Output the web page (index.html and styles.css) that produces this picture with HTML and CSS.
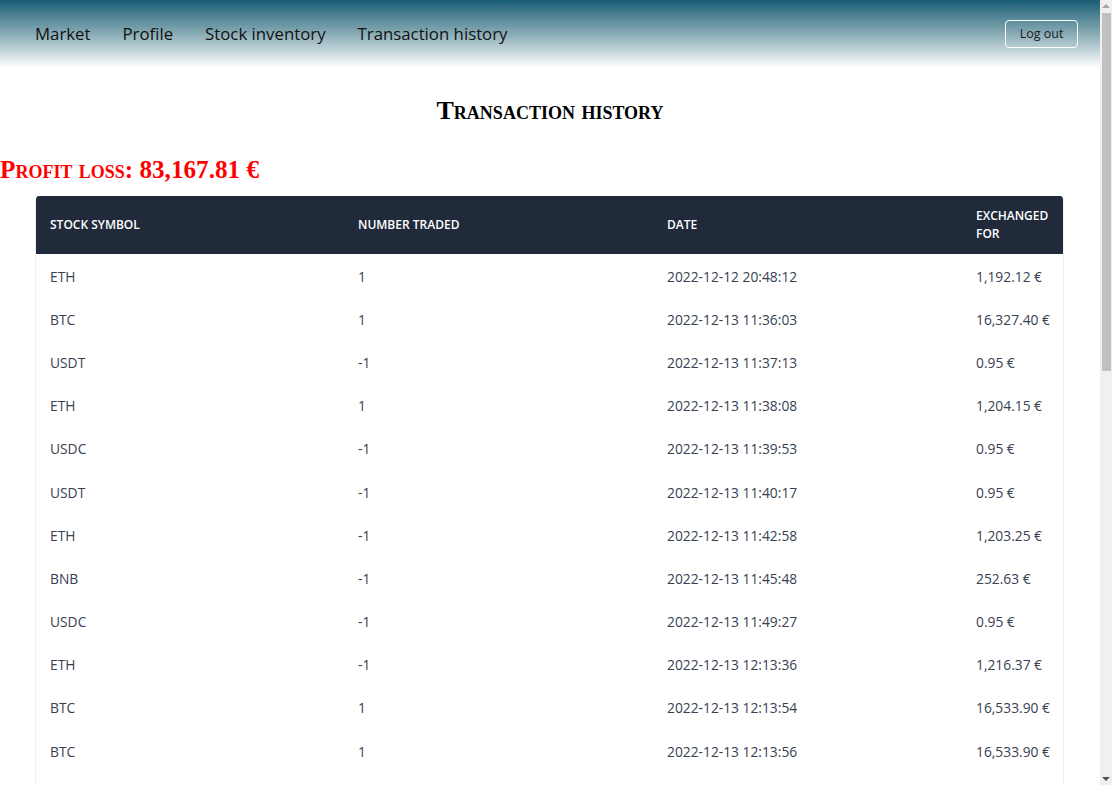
FILE: index.html
```html
<!DOCTYPE html>
<html lang="en">
<head>
<meta charset="utf-8">
<title>Transaction history</title>
<link rel="stylesheet" href="styles.css">
</head>
<body>
<div class="page">
<header class="topbar">
  <nav class="nav">
    <a class="nav-link" href="#">Market</a>
    <a class="nav-link" href="#">Profile</a>
    <a class="nav-link" href="#">Stock inventory</a>
    <a class="nav-link" href="#">Transaction history</a>
  </nav>
  <button class="logout">Log out</button>
</header>
<main>
  <h1 class="title">Transaction history</h1>
  <h2 class="profit">Profit loss: 83,167.81 €</h2>
  <div class="table-wrap">
    <table class="tx">
      <colgroup>
        <col class="c1"><col class="c2"><col class="c3"><col class="c4">
      </colgroup>
      <thead>
        <tr><th>Stock symbol</th><th>Number traded</th><th>Date</th><th>Exchanged for</th></tr>
      </thead>
      <tbody>
        <tr><td>ETH</td><td>1</td><td>2022-12-12 20:48:12</td><td>1,192.12 €</td></tr>
        <tr><td>BTC</td><td>1</td><td>2022-12-13 11:36:03</td><td>16,327.40 €</td></tr>
        <tr><td>USDT</td><td>-1</td><td>2022-12-13 11:37:13</td><td>0.95 €</td></tr>
        <tr><td>ETH</td><td>1</td><td>2022-12-13 11:38:08</td><td>1,204.15 €</td></tr>
        <tr><td>USDC</td><td>-1</td><td>2022-12-13 11:39:53</td><td>0.95 €</td></tr>
        <tr><td>USDT</td><td>-1</td><td>2022-12-13 11:40:17</td><td>0.95 €</td></tr>
        <tr><td>ETH</td><td>-1</td><td>2022-12-13 11:42:58</td><td>1,203.25 €</td></tr>
        <tr><td>BNB</td><td>-1</td><td>2022-12-13 11:45:48</td><td>252.63 €</td></tr>
        <tr><td>USDC</td><td>-1</td><td>2022-12-13 11:49:27</td><td>0.95 €</td></tr>
        <tr><td>ETH</td><td>-1</td><td>2022-12-13 12:13:36</td><td>1,216.37 €</td></tr>
        <tr><td>BTC</td><td>1</td><td>2022-12-13 12:13:54</td><td>16,533.90 €</td></tr>
        <tr><td>BTC</td><td>1</td><td>2022-12-13 12:13:56</td><td>16,533.90 €</td></tr>
        <tr><td>BTC</td><td>1</td><td>2022-12-13 12:14:02</td><td>16,533.90 €</td></tr>
        <tr><td>ETH</td><td>1</td><td>2022-12-13 12:15:21</td><td>1,216.37 €</td></tr>
      </tbody>
    </table>
  </div>
</main>
</div>
<div class="scrollbar" aria-hidden="true">
  <div class="sb-btn"><span class="tri-up"></span></div>
  <div class="sb-thumb"></div>
  <div class="sb-track"></div>
  <div class="sb-btn"><span class="tri-down"></span></div>
</div>
</body>
</html>
```
FILE: styles.css
```css
html, body {
  margin: 0;
  padding: 0;
}
body {
  font-family: "Open Sans", "Noto Sans", sans-serif;
  background: #ffffff;
  color: #111;
  display: flex;
  align-items: flex-start;
}
.page {
  flex: 1;
  min-width: 0;
}
.scrollbar {
  width: 12px;
  height: 100vh;
  flex-shrink: 0;
  position: sticky;
  top: 0;
  background: #f0f0f0;
  display: flex;
  flex-direction: column;
  align-items: center;
}
.sb-btn {
  height: 12px;
  width: 12px;
  display: flex;
  align-items: center;
  justify-content: center;
}
.tri-up {
  width: 0;
  height: 0;
  border-left: 4px solid transparent;
  border-right: 4px solid transparent;
  border-bottom: 4px solid #a3a3a3;
}
.tri-down {
  width: 0;
  height: 0;
  border-left: 4px solid transparent;
  border-right: 4px solid transparent;
  border-top: 4px solid #505050;
}
.sb-thumb {
  width: 9px;
  height: 358px;
  margin-top: 1px;
  background: #c1c1c1;
}
.sb-track {
  flex: 1;
}
.topbar {
  height: 68px;
  background: linear-gradient(to bottom, #1a5e76 0%, #7ea4af 45%, #ffffff 100%);
  display: flex;
  align-items: center;
  justify-content: space-between;
  padding: 0 22px 0 35px;
}
.nav {
  display: flex;
  gap: 32px;
  align-items: center;
  margin-top: -1px;
}
.nav-link {
  color: #111;
  text-decoration: none;
  font-size: 16.8px;
}
.logout {
  width: 73px;
  height: 28px;
  border: 1px solid #ffffff;
  border-radius: 4px;
  background: transparent;
  color: #1a1a1a;
  font-family: "Open Sans", "Noto Sans", sans-serif;
  font-size: 12.5px;
  padding: 0;
  margin-bottom: 1px;
}
.title {
  font-family: "Liberation Serif", "Times New Roman", serif;
  font-variant: small-caps;
  font-weight: bold;
  font-size: 26px;
  text-align: center;
  margin: 28px 0 0;
  line-height: 30px;
  color: #000;
}
.profit {
  font-family: "Liberation Serif", "Times New Roman", serif;
  font-variant: small-caps;
  font-weight: bold;
  font-size: 25.2px;
  color: #ff0000;
  margin: 30px 0 0;
  line-height: 28px;
}
.table-wrap {
  margin: 12px 36px 0 35px;
  border-left: 1px solid #eef0f2;
  border-right: 1px solid #eef0f2;
  border-radius: 4px 4px 0 0;
  overflow: hidden;
}
.tx {
  width: 100%;
  border-collapse: collapse;
  table-layout: fixed;
  font-size: 13.8px;
}
.c1 { width: 308px; }
.c2 { width: 309px; }
.c3 { width: 309px; }
.c4 { width: auto; }
.tx thead tr {
  background: #202a3a;
}
.tx th {
  color: #ffffff;
  text-transform: uppercase;
  font-size: 12px;
  font-weight: 600;
  text-align: left;
  line-height: 18px;
  padding: 11px 14px;
  height: 36px;
}
.tx td {
  color: #374151;
  padding: 1px 14px 0;
  height: 42.2px;
  line-height: 19px;
  white-space: nowrap;
}
```
